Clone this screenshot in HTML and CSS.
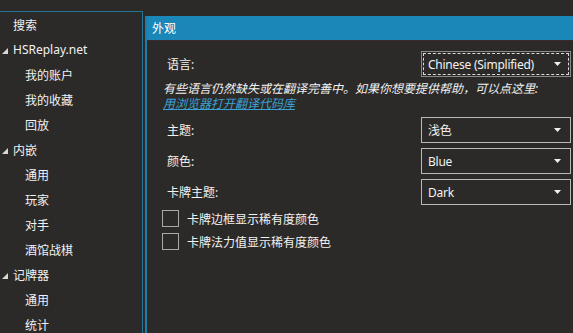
FILE: index.html
```html
<!DOCTYPE html>
<html lang="zh-CN">
<head>
<meta charset="utf-8">
<link rel="stylesheet" href="styles.css">
</head>
<body>
<div class="app">
  <nav class="tree">
    <div class="item lvl0">搜索</div>
    <div class="item lvl0 parent"><svg class="exp" width="6" height="6" viewBox="0 0 6 6"><polygon points="6,0 6,6 0,6"/></svg>HSReplay.net</div>
    <div class="item lvl1">我的账户</div>
    <div class="item lvl1">我的收藏</div>
    <div class="item lvl1">回放</div>
    <div class="item lvl0 parent"><svg class="exp" width="6" height="6" viewBox="0 0 6 6"><polygon points="6,0 6,6 0,6"/></svg>内嵌</div>
    <div class="item lvl1">通用</div>
    <div class="item lvl1">玩家</div>
    <div class="item lvl1">对手</div>
    <div class="item lvl1">酒馆战棋</div>
    <div class="item lvl0 parent"><svg class="exp" width="6" height="6" viewBox="0 0 6 6"><polygon points="6,0 6,6 0,6"/></svg>记牌器</div>
    <div class="item lvl1">通用</div>
    <div class="item lvl1">统计</div>
  </nav>
  <section class="group">
    <header class="group-head">外观</header>
    <div class="group-body">
      <div class="row">
        <span class="label">语言:</span>
        <div class="combo focused"><span class="val">Chinese (Simplified)</span><svg class="arrow" width="7" height="4" viewBox="0 0 7 4"><polygon points="0,0 7,0 3.5,4"/></svg></div>
      </div>
      <div class="note">
        <div class="note-line">有些语言仍然缺失或在翻译完善中。如果你想要提供帮助，可以点这里:</div>
        <div class="note-line"><a class="link" href="#">用浏览器打开翻译代码库</a></div>
      </div>
      <div class="row r2">
        <span class="label">主题:</span>
        <div class="combo"><span class="val">浅色</span><svg class="arrow" width="7" height="4" viewBox="0 0 7 4"><polygon points="0,0 7,0 3.5,4"/></svg></div>
      </div>
      <div class="row r3">
        <span class="label">颜色:</span>
        <div class="combo"><span class="val">Blue</span><svg class="arrow" width="7" height="4" viewBox="0 0 7 4"><polygon points="0,0 7,0 3.5,4"/></svg></div>
      </div>
      <div class="row r3">
        <span class="label">卡牌主题:</span>
        <div class="combo"><span class="val">Dark</span><svg class="arrow" width="7" height="4" viewBox="0 0 7 4"><polygon points="0,0 7,0 3.5,4"/></svg></div>
      </div>
      <label class="check c1"><span class="box"></span>卡牌边框显示稀有度颜色</label>
      <label class="check c2"><span class="box"></span>卡牌法力值显示稀有度颜色</label>
    </div>
  </section>
</div>
</body>
</html>
```

FILE: styles.css
```css
* { box-sizing: border-box; }
html, body {
  margin: 0;
  padding: 0;
  background: #2b2a29;
  overflow: hidden;
}
body {
  width: 573px;
  height: 333px;
  font-family: "Noto Sans", "Noto Sans CJK SC", sans-serif;
  font-size: 12px;
  color: #f2f2f2;
}
.app {
  display: flex;
  align-items: flex-start;
  height: 333px;
}
.tree {
  width: 143px;
  flex: none;
  margin-top: 11px;
  height: 330px;
  border-top: 1px solid #227594;
  border-right: 1px solid #227594;
}
.item {
  height: 25px;
  display: flex;
  align-items: center;
  white-space: nowrap;
}
.lvl0 { padding-left: 13px; }
.lvl1 { padding-left: 25px; }
.parent { padding-left: 2px; }
.exp {
  fill: #d8d8d8;
  margin-right: 5px;
  margin-top: 2px;
}
.group {
  width: 432px;
  flex: none;
  margin-left: 2px;
  margin-top: 16px;
  height: 330px;
  border-left: 2px solid #1b7fae;
}
.group-head {
  height: 24px;
  background: #1b87b9;
  color: #ffffff;
  padding-left: 5px;
  display: flex;
  align-items: center;
}
.group-body {
  padding: 10px 6px 0 15px;
  border-top: 1px solid #3a2a2e;
}
.row {
  display: flex;
  justify-content: space-between;
  align-items: center;
  height: 26px;
}
.r2 { margin-top: 6px; }
.r3 { margin-top: 5px; }
.label { padding-left: 5px; }
.combo {
  width: 150px;
  height: 26px;
  border: 1px solid #b9b9b9;
  display: flex;
  align-items: center;
  justify-content: space-between;
  padding: 0 9px 0 6px;
  position: relative;
  white-space: nowrap;
}
.val { letter-spacing: -0.25px; }
.combo.focused { border-color: #8a8a8a; }
.combo.focused::after {
  content: "";
  position: absolute;
  inset: 1px;
  border: 1px dashed #dadada;
}
.arrow { fill: #f0f0f0; flex: none; }
.note {
  margin: 4px 0 0 1px;
  font-style: italic;
  white-space: nowrap;
}
.note-line {
  height: 15px;
  line-height: 15px;
}
.link {
  color: #3aa2d5;
  text-decoration: underline;
}
.check {
  display: flex;
  align-items: center;
  height: 17px;
  white-space: nowrap;
}
.c1 { margin-top: 5px; }
.c2 { margin-top: 6px; }
.box {
  width: 17px;
  height: 17px;
  border: 1px solid #a8a8a8;
  margin-right: 8px;
  flex: none;
}
```
